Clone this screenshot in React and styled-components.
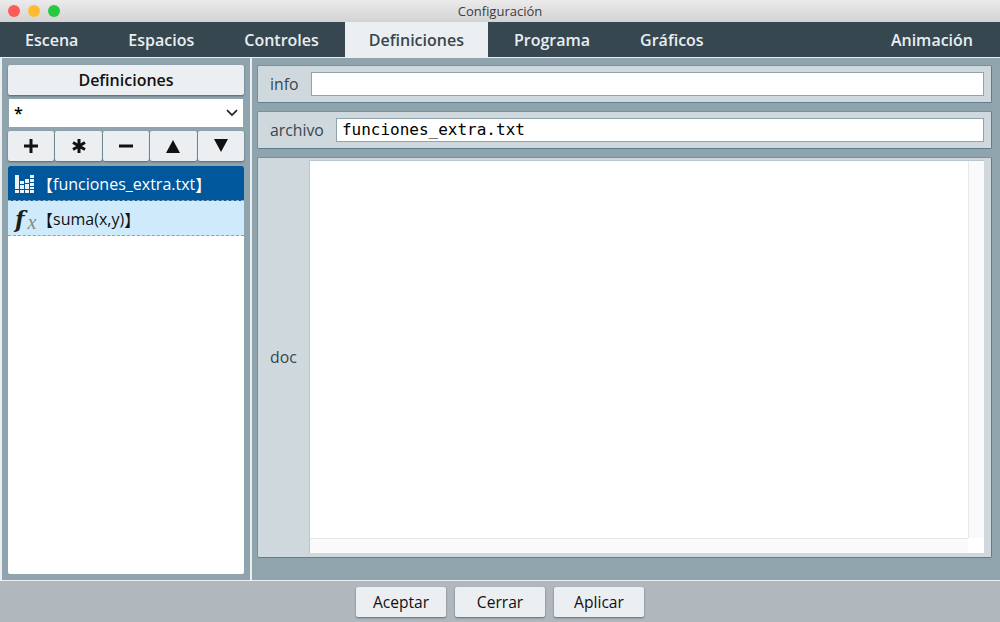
import React from "react";
import styled, { createGlobalStyle } from "styled-components";

const Global = createGlobalStyle`
  html, body { margin: 0; padding: 0; background: #eef1f3; }
  * { box-sizing: border-box; }
`;

const sans = `"Open Sans", "Noto Sans", sans-serif`;

const Win = styled.div`
  width: 1000px;
  height: 622px;
  display: flex;
  flex-direction: column;
  overflow: hidden;
  font-family: ${sans};
  position: relative;
`;

const TitleBar = styled.div`
  height: 22px;
  flex: none;
  display: flex;
  align-items: center;
  justify-content: center;
  position: relative;
  background: linear-gradient(#ebebeb, #d3d3d3);
  font-size: 13px;
  color: #3c3c3c;
`;

const Lights = styled.div`
  position: absolute;
  left: 8px;
  top: 5px;
  display: flex;
  gap: 8px;
`;

const Light = styled.span`
  width: 12px;
  height: 12px;
  border-radius: 50%;
  background: ${(p) => p.$c};
`;

const Tabs = styled.div`
  height: 35px;
  flex: none;
  display: flex;
  background: #37474f;
  padding-right: 2px;
`;

const Tab = styled.div`
  display: flex;
  align-items: center;
  padding: 0 ${(p) => (p.$active ? "24px" : "25px")};
  margin: 0 ${(p) => (p.$active ? "1px" : "0")};
  margin-left: ${(p) => (p.$right ? "auto" : p.$active ? "1px" : "0")};
  font-size: 16px;
  font-weight: 600;
  color: ${(p) => (p.$active ? "#37474f" : "#e8eef2")};
  background: ${(p) => (p.$active ? "#eceff1" : "transparent")};
`;

const Main = styled.div`
  flex: 1;
  min-height: 0;
  display: flex;
  border-top: 1px solid #eceff1;
  border-bottom: 1px solid #eceff1;
  background: #eceff1;
  padding-left: 2px;
  gap: 2px;
`;

const Left = styled.div`
  width: 248px;
  flex: none;
  background: #90a4ae;
  padding: 7px 6px 6px 6px;
  display: flex;
  flex-direction: column;
`;

const SideTitle = styled.div`
  height: 30px;
  flex: none;
  display: flex;
  align-items: center;
  justify-content: center;
  background: #eceff1;
  border-radius: 2px;
  box-shadow: 0 1px 2px rgba(40, 60, 70, 0.6);
  font-size: 16px;
  font-weight: 600;
  color: #111;
`;

const Select = styled.div`
  height: 28px;
  flex: none;
  margin: 4px 1px 4px 1px;
  padding: 0 5px 0 5px;
  display: flex;
  align-items: center;
  justify-content: space-between;
  background: #fff;
  font-size: 16px;
  font-weight: 600;
  color: #000;
`;

const BtnRow = styled.div`
  height: 30px;
  flex: none;
  display: grid;
  grid-template-columns: repeat(5, 1fr);
  gap: 1px;
  margin-bottom: 5px;
`;

const IconBtn = styled.div`
  display: flex;
  align-items: center;
  justify-content: center;
  background: #eceff1;
  border-radius: 2px;
  box-shadow: 0 1px 2px rgba(40, 60, 70, 0.6);
`;

const List = styled.div`
  flex: 1;
  background: #fff;
  border-radius: 2px;
  overflow: hidden;
`;

const Item = styled.div`
  height: 35px;
  display: flex;
  align-items: center;
  padding: 1px 0 0 7px;
  font-size: 16px;
  color: ${(p) => (p.$sel ? "#fff" : "#111")};
  background: ${(p) => (p.$sel ? "#01579b" : "#cfebfb")};
  border-bottom: 1px dashed ${(p) => (p.$sel ? "#9ab" : "#90a4ae")};
`;

const ItemIcon = styled.span`
  width: 23px;
  margin-right: -1px;
  flex: none;
  display: flex;
  align-items: center;
`;

const Bracket = styled.span`
  font-family: "Noto Sans CJK JP", sans-serif;
`;

const Fx = styled.span`
  font-family: "DejaVu Serif", serif;
  font-style: italic;
  font-weight: 700;
  font-size: 22px;
  line-height: 1;
  color: #1c1c1c;
  display: flex;
  align-items: baseline;
  & > i {
    font-family: "Liberation Serif", serif;
    font-size: 20px;
    font-weight: 400;
    color: #7f8b8e;
    margin-left: 3px;
    transform: translateY(2px);
  }
`;

const Right = styled.div`
  flex: 1;
  min-width: 0;
  background: #90a4ae;
  padding: 7px 8px 22px 5px;
  display: flex;
  flex-direction: column;
  gap: 8px;
`;

const Panel = styled.div`
  flex: ${(p) => (p.$grow ? "1" : "none")};
  height: ${(p) => (p.$grow ? "auto" : "38px")};
  min-height: 0;
  display: flex;
  align-items: ${(p) => (p.$grow ? "stretch" : "center")};
  background: #cfd8dc;
  border: 1px solid #607d8b;
  border-top-color: #78909c;
  border-left-color: #78909c;
  border-radius: 2px;
  padding: ${(p) => (p.$grow ? "2px 7px 4px 0" : "0 7px 0 0")};
`;

const Label = styled.div`
  flex: none;
  padding: 0 12px;
  font-size: 15.8px;
  color: #37474f;
  align-self: center;
`;

const Input = styled.div`
  flex: 1;
  height: 24px;
  background: #fff;
  border: 1px solid #90a4ae;
  font-family: "DejaVu Sans Mono", monospace;
  font-size: 16px;
  line-height: 22px;
  padding-left: 5px;
  color: #000;
`;

const Doc = styled.div`
  flex: 1;
  position: relative;
  background: #fff;
  border-left: 1px solid #b8c6cd;
  border-top: 1px solid #b8c6cd;
`;

const ScrollV = styled.div`
  position: absolute;
  top: 0;
  right: 0;
  bottom: 15px;
  width: 16px;
  background: #fafafa;
  border-left: 1px solid #e8e8e8;
`;

const ScrollH = styled.div`
  position: absolute;
  left: 0;
  right: 16px;
  bottom: 0;
  height: 15px;
  background: #fafafa;
  border-top: 1px solid #e8e8e8;
`;

const Footer = styled.div`
  height: 41px;
  flex: none;
  background: #b0b7bd;
  display: flex;
  justify-content: center;
  gap: 9px;
  padding-top: 6px;
`;

const FootBtn = styled.div`
  width: 90px;
  height: 30px;
  display: flex;
  align-items: center;
  justify-content: center;
  background: #eceff1;
  border-radius: 2px;
  box-shadow: 0 1px 2px rgba(40, 60, 70, 0.6);
  font-size: 15.6px;
  font-weight: 500;
  color: #111;
`;

const Chevron = () => (
  <svg width="12" height="8" viewBox="0 0 12 8">
    <path d="M1 1.2 L6 6 L11 1.2" fill="none" stroke="#222" strokeWidth="1.7" />
  </svg>
);

const Plus = () => (
  <svg width="16" height="16" viewBox="0 0 16 16">
    <path d="M8 1v14M1 8h14" stroke="#111" strokeWidth="3" />
  </svg>
);

const Star = () => (
  <svg width="16" height="16" viewBox="0 0 16 16">
    <path d="M8 1v14M2 4.5l12 7M14 4.5l-12 7" stroke="#111" strokeWidth="3" />
  </svg>
);

const Minus = () => (
  <svg width="16" height="16" viewBox="0 0 16 16">
    <path d="M1 8h14" stroke="#111" strokeWidth="3" />
  </svg>
);

const Up = () => (
  <svg width="16" height="14" viewBox="0 0 16 14">
    <path d="M8 1L15 14H1Z" fill="#111" />
  </svg>
);

const Down = () => (
  <svg width="16" height="14" viewBox="0 0 16 14">
    <path d="M1 0H15L8 13Z" fill="#111" />
  </svg>
);

// four columns of cells, tallest on the outside
const barCols = [
  { x: 0, cells: [[0, 14], [15, 3]] },
  { x: 5, cells: [[6, 3], [10, 4], [15, 3]] },
  { x: 10, cells: [[4, 4], [9, 5], [15, 3]] },
  { x: 15, cells: [[0, 3], [4, 3], [8, 3], [12, 2], [15, 3]] },
];

const Bars = () => (
  <svg width="19" height="18" viewBox="0 0 19 18">
    {barCols.map((col) =>
      col.cells.map(([y, h]) => (
        <rect key={col.x + "-" + y} x={col.x} y={y} width="4" height={h} fill="#fff" opacity="0.92" />
      ))
    )}
  </svg>
);

export default function App() {
  return (
    <Win>
      <Global />
      <TitleBar>
        <Lights>
          <Light $c="#fc5b57" />
          <Light $c="#febb2e" />
          <Light $c="#28c840" />
        </Lights>
        Configuración
      </TitleBar>
      <Tabs>
        <Tab>Escena</Tab>
        <Tab>Espacios</Tab>
        <Tab>Controles</Tab>
        <Tab $active>Definiciones</Tab>
        <Tab>Programa</Tab>
        <Tab>Gráficos</Tab>
        <Tab $right>Animación</Tab>
      </Tabs>
      <Main>
        <Left>
          <SideTitle>Definiciones</SideTitle>
          <Select>
            *
            <Chevron />
          </Select>
          <BtnRow>
            <IconBtn><Plus /></IconBtn>
            <IconBtn><Star /></IconBtn>
            <IconBtn><Minus /></IconBtn>
            <IconBtn><Up /></IconBtn>
            <IconBtn><Down /></IconBtn>
          </BtnRow>
          <List>
            <Item $sel>
              <ItemIcon><Bars /></ItemIcon>
              <Bracket>【</Bracket>funciones_extra.txt<Bracket>】</Bracket>
            </Item>
            <Item>
              <ItemIcon><Fx>f<i>x</i></Fx></ItemIcon>
              <Bracket>【</Bracket>suma(x,y)<Bracket>】</Bracket>
            </Item>
          </List>
        </Left>
        <Right>
          <Panel>
            <Label>info</Label>
            <Input />
          </Panel>
          <Panel>
            <Label>archivo</Label>
            <Input>funciones_extra.txt</Input>
          </Panel>
          <Panel $grow>
            <Label>doc</Label>
            <Doc>
              <ScrollV />
              <ScrollH />
            </Doc>
          </Panel>
        </Right>
      </Main>
      <Footer>
        <FootBtn>Aceptar</FootBtn>
        <FootBtn>Cerrar</FootBtn>
        <FootBtn>Aplicar</FootBtn>
      </Footer>
    </Win>
  );
}
